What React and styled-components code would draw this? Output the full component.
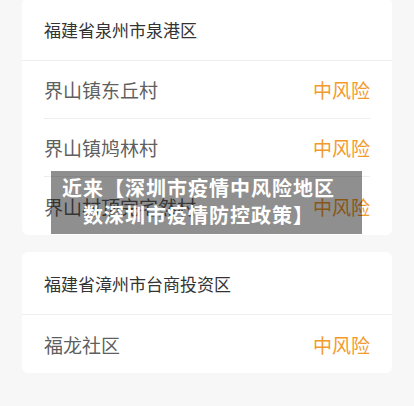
import React from 'react';
import styled, { createGlobalStyle } from 'styled-components';

const GlobalStyle = createGlobalStyle`
  html, body {
    margin: 0;
    padding: 0;
    background: #f7f7f7;
    font-family: "Noto Sans CJK SC", "Noto Sans", sans-serif;
  }
`;

const Page = styled.div`
  position: relative;
  width: 414px;
  height: 406px;
  overflow: hidden;
  box-sizing: border-box;
  padding: 0 22px;
  display: flex;
  flex-direction: column;
  gap: 17px;
`;

const Card = styled.div`
  background: #fff;
  border-radius: 6px;
  margin-top: ${(p) => (p.$first ? '-2px' : '0')};
`;

const Header = styled.div`
  height: 63px;
  box-sizing: border-box;
  display: flex;
  align-items: center;
  padding: 0 22px;
  font-size: 17px;
  color: #333;
  border-bottom: 1px solid #eeeeee;
`;

const Row = styled.div`
  height: 58px;
  margin: 0 22px;
  box-sizing: border-box;
  display: flex;
  align-items: center;
  justify-content: space-between;
  font-size: 19px;
  color: #5f5f5f;
  border-bottom: ${(p) => (p.$last ? 'none' : '1px solid #eeeeee')};
`;

const Risk = styled.span`
  color: #f29b2c;
`;

const Banner = styled.div`
  position: absolute;
  left: 51px;
  top: 171px;
  width: 311px;
  height: 63px;
  box-sizing: border-box;
  padding: 3px 16px 0 0;
  background: rgba(0, 0, 0, 0.44);
  color: #fff;
  font-weight: 700;
  font-size: 20px;
  line-height: 27px;
  letter-spacing: 1px;
  text-align: center;
`;

const groups = [
  {
    area: '福建省泉州市泉港区',
    places: ['界山镇东丘村', '界山镇鸠林村', '界山村顶完宅然村'],
  },
  {
    area: '福建省漳州市台商投资区',
    places: ['福龙社区'],
  },
];

export default function App() {
  return (
    <>
      <GlobalStyle />
      <Page>
        {groups.map((g, i) => (
          <Card key={g.area} $first={i === 0}>
            <Header>{g.area}</Header>
            {g.places.map((p, j) => (
              <Row key={p} $last={j === g.places.length - 1}>
                <span>{p}</span>
                <Risk>中风险</Risk>
              </Row>
            ))}
          </Card>
        ))}
        <Banner>
          近来【深圳市疫情中风险地区
          <br />
          数深圳市疫情防控政策】
        </Banner>
      </Page>
    </>
  );
}
